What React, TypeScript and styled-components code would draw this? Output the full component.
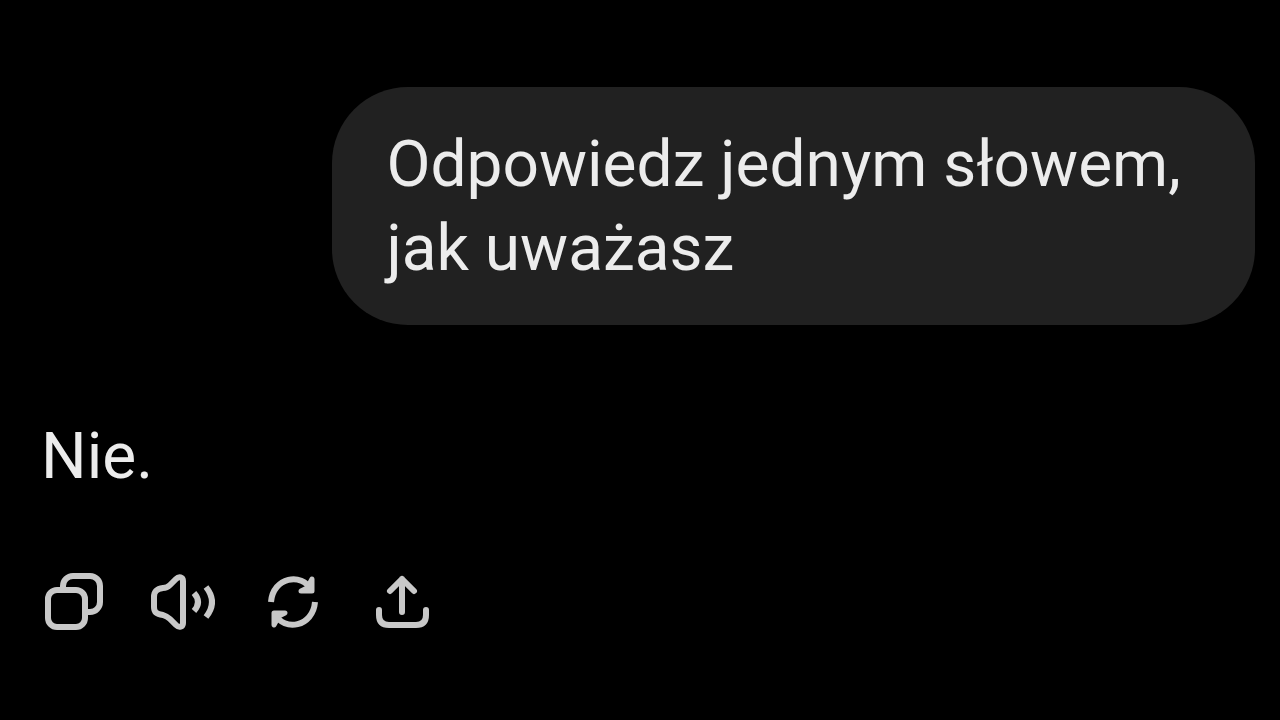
import React from "react";
import styled, { createGlobalStyle } from "styled-components";

const GlobalStyle = createGlobalStyle`
  *, *::before, *::after { box-sizing: border-box; }
  body {
    margin: 0;
    background: #000;
    color: #ececec;
    font-family: Roboto, "Liberation Sans", sans-serif;
    font-size: 64px;
    line-height: 84px;
  }
`;

const Conversation = styled.main`
  display: flex;
  flex-direction: column;
  min-height: 100vh;
  padding: 87px 25px 24px 41px;
`;

const UserMessage = styled.p`
  align-self: flex-end;
  width: 76%;
  margin: 0;
  padding: 36px 54px 34px;
  border-radius: 76px;
  background: #212121;
`;

const AssistantMessage = styled.article`
  display: flex;
  flex-direction: column;
  gap: 71px;
  margin-top: 90px;
`;

const Answer = styled.p`
  margin: 0;
`;

const Actions = styled.div`
  display: flex;
  gap: 46px;
`;

const IconButton = styled.button`
  display: flex;
  width: 64px;
  height: 64px;
  padding: 0;
  border: 0;
  background: none;
  color: #c8c8c8;
  cursor: pointer;
`;

const Icon = styled.svg`
  width: 100%;
  height: 100%;
  fill: none;
  stroke: currentColor;
  stroke-width: 6;
  stroke-linecap: round;
  stroke-linejoin: round;
`;

const actions = [
  {
    label: "Kopiuj",
    drawing: (
      <>
        <rect x="7" y="20" width="37" height="37" rx="9" />
        <path d="M22 18V16a10 10 0 0 1 10-10H49a10 10 0 0 1 10 10V32a10 10 0 0 1-10 10H46" />
      </>
    ),
  },
  {
    label: "Czytaj na głos",
    drawing: (
      <>
        <path d="M32 11V53C32 57 28 58 25 55L19 49C17 47 15 46 12 45C5 44 3 42 3 37V27C3 22 5 19 12 18C15 18 17 17 19 15L25 9C28 6 32 7 32 11Z" />
        <path d="M43 23Q51 32 43 41" strokeLinecap="butt" />
        <path d="M55 17Q67 32 55 47" strokeLinecap="butt" />
      </>
    ),
  },
  {
    label: "Wygeneruj ponownie",
    drawing: (
      <>
        <path d="M10 32C12 7 41 2 50 20" strokeLinecap="butt" />
        <path d="M54 32C52 57 23 62 14 44" strokeLinecap="butt" />
        <path d="M51 9V21H40L46 18Z" strokeWidth="5" />
        <path d="M13 55V43H24L18 46Z" strokeWidth="5" />
      </>
    ),
  },
  {
    label: "Udostępnij",
    drawing: (
      <>
        <path d="M31 42V9M19 21L31 9L43 21" />
        <path d="M8 40V45Q8 55 18 55H45Q55 55 55 45V40" />
      </>
    ),
  },
];

export default function App() {
  return (
    <>
      <GlobalStyle />
      <Conversation lang="pl">
        <UserMessage>Odpowiedz jednym słowem, jak uważasz</UserMessage>
        <AssistantMessage>
          <Answer>Nie.</Answer>
          <Actions>
            {actions.map(({ label, drawing }) => (
              <IconButton key={label} type="button" aria-label={label}>
                <Icon viewBox="0 0 64 64" aria-hidden="true">
                  {drawing}
                </Icon>
              </IconButton>
            ))}
          </Actions>
        </AssistantMessage>
      </Conversation>
    </>
  );
}
